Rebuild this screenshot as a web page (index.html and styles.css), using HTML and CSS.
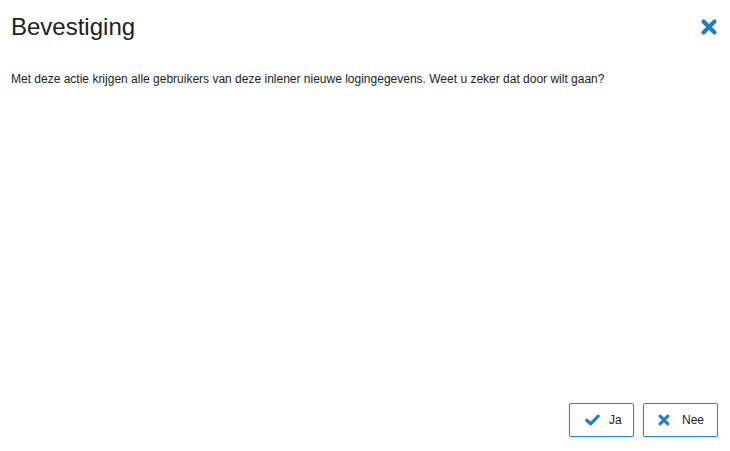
FILE: index.html
```html
<!DOCTYPE html>
<html lang="nl">
<head>
<meta charset="utf-8">
<title>Bevestiging</title>
<link rel="stylesheet" href="styles.css">
</head>
<body>
<div class="modal">
  <div class="modal-header">
    <h1 class="modal-title">Bevestiging</h1>
    <button class="close" aria-label="Sluiten">
      <svg width="18" height="18" viewBox="0 0 18 18"><path d="M3.5 3.5 L14.5 14.5 M14.5 3.5 L3.5 14.5" stroke="#1f7fc4" stroke-width="4.2" stroke-linecap="round"/></svg>
    </button>
  </div>
  <div class="modal-body">
    <p>Met deze actie krijgen alle gebruikers van deze inlener nieuwe logingegevens. Weet u zeker dat door wilt gaan?</p>
  </div>
  <div class="modal-footer">
    <button class="btn btn-ja">
      <svg width="15" height="12" viewBox="0 0 15 12"><path d="M1.8 6.3 L5.6 9.8 L13.2 2.2" fill="none" stroke="#1f7fc4" stroke-width="3.2" stroke-linecap="round" stroke-linejoin="round"/></svg>
      <span>Ja</span>
    </button>
    <button class="btn btn-nee">
      <svg width="12" height="12" viewBox="0 0 12 12"><path d="M2.2 2.2 L9.8 9.8 M9.8 2.2 L2.2 9.8" stroke="#1f7fc4" stroke-width="3.2" stroke-linecap="round"/></svg>
      <span>Nee</span>
    </button>
  </div>
</div>
</body>
</html>
```
FILE: styles.css
```css
html, body {
  margin: 0;
  padding: 0;
  background: #fff;
}
body {
  font-family: "Liberation Sans", Arial, sans-serif;
  color: #333;
}
.modal {
  height: 451px;
  display: flex;
  flex-direction: column;
  box-sizing: border-box;
}
.modal-header {
  display: flex;
  justify-content: space-between;
  align-items: center;
  padding: 12px 11px 0 11px;
}
.modal-title {
  margin: 0;
  font-size: 24px;
  font-weight: normal;
  line-height: 30px;
  color: #222;
}
.close {
  border: 0;
  background: none;
  padding: 0;
  margin-right: 1px;
  margin-top: 0;
  display: flex;
  cursor: pointer;
}
.modal-body {
  flex: 1;
  padding: 29px 11px 0 11px;
}
.modal-body p {
  margin: 0;
  font-size: 12px;
  line-height: 16px;
  color: #222;
}
.modal-footer {
  display: flex;
  justify-content: flex-end;
  gap: 9px;
  padding: 0 12px 14px 0;
}
.btn {
  height: 34px;
  box-sizing: border-box;
  border: 1px solid #2d86c4;
  border-radius: 2px;
  background: #fff;
  box-shadow: 0 1px 2px rgba(0,0,0,0.15);
  display: flex;
  align-items: center;
  font-family: "Liberation Sans", Arial, sans-serif;
  font-size: 12px;
  color: #222;
  padding: 0;
}
.btn-ja {
  width: 65px;
  padding-left: 15px;
  gap: 9px;
}
.btn-nee {
  width: 75px;
  padding-left: 14px;
  gap: 12px;
}
```
